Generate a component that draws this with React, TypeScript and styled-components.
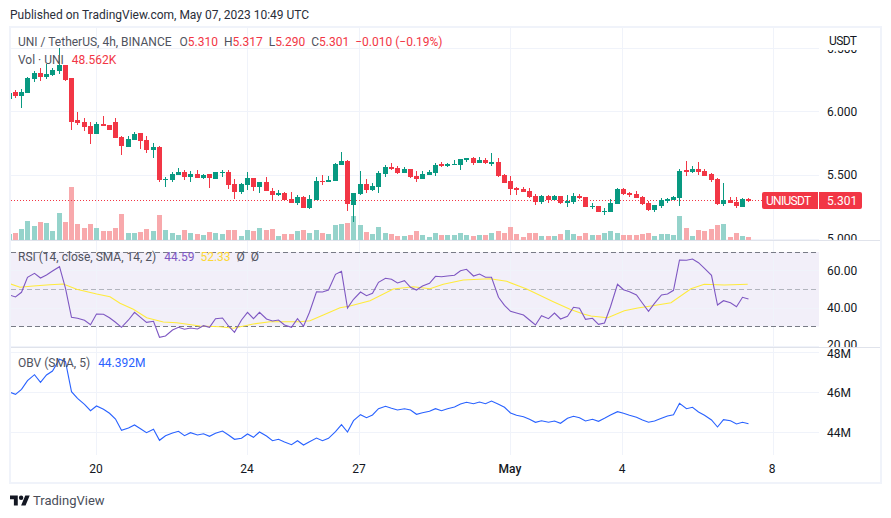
import React from "react";
import styled, { createGlobalStyle } from "styled-components";

const UI = `Roboto, "Open Sans", sans-serif`;
const RED = "#f23645";
const GREEN = "#089981";
const GRID = "#f0f3fa";

const Global = createGlobalStyle`
  html, body { margin: 0; padding: 0; background: #fff; }
  body { font-family: ${UI}; color: #131722; }
`;

const Page = styled.div`
  width: 891px;
  height: 518px;
  display: flex;
  flex-direction: column;
  overflow: hidden;
  background: #fff;
`;
const Published = styled.div`
  height: 26px;
  padding: 7px 0 0 10px;
  box-sizing: border-box;
  font-size: 12px;
  line-height: 16px;
  color: #2a2e39;
`;
const Frame = styled.div`
  margin-left: 9px;
  width: 873px;
  height: 458px;
  box-sizing: border-box;
  border: 2px solid ${GRID};
  display: flex;
  flex-direction: column;
`;
const Pane = styled.div<{ $h: number; $line?: boolean }>`
  position: relative;
  height: ${(p) => p.$h}px;
  display: grid;
  grid-template-columns: 808px 61px;
  flex: none;
  ${(p) => (p.$line ? "border-bottom: 1px solid #e0e3eb;" : "")}
`;
const Plot = styled.svg`
  display: block;
  width: 808px;
  height: 100%;
`;
const Axis = styled.div`
  position: relative;
  overflow: hidden;
  background: #fff;
`;
const Tick = styled.div<{ $y: number }>`
  position: absolute;
  left: 8px;
  top: ${(p) => p.$y - 7}px;
  font-size: 12px;
  line-height: 16px;
  color: #131722;
`;
const Unit = styled.div`
  position: absolute;
  left: 0;
  top: 0;
  width: 100%;
  height: 22px;
  box-sizing: border-box;
  padding: 5px 0 0 10px;
  background: #fff;
  font-size: 12px;
  line-height: 16px;
  letter-spacing: -0.6px;
  color: #131722;
`;
const Legend = styled.div<{ $top: number }>`
  position: absolute;
  left: 7px;
  top: ${(p) => p.$top}px;
  display: flex;
  flex-direction: column;
  gap: 2px;
  font-size: 12px;
  line-height: 16px;
  color: #50535e;
  white-space: nowrap;
`;
const LegendRow = styled.div`
  display: flex;
  gap: 6px;
`;
const Title = styled.span`
  margin-right: 2px;
`;
const Val = styled.span<{ $c: string }>`
  color: ${(p) => p.$c};
`;
const PriceTag = styled.div`
  position: absolute;
  left: 751px;
  top: 164px;
  height: 17px;
  display: flex;
  gap: 1px;
  font-size: 12px;
  line-height: 18px;
  color: #fff;
`;
const TagName = styled.div`
  width: 56px;
  box-sizing: border-box;
  padding-left: 4px;
  letter-spacing: -0.7px;
  background: ${RED};
  border-radius: 2px 0 0 2px;
`;
const TagPrice = styled.div`
  width: 43px;
  box-sizing: border-box;
  padding-left: 8px;
  background: ${RED};
  border-radius: 0 2px 2px 0;
`;
const TimeAxis = styled.div`
  position: relative;
  height: 27px;
  flex: none;
`;
const TimeLabel = styled.div<{ $x: number; $bold?: boolean }>`
  position: absolute;
  left: ${(p) => p.$x}px;
  top: 6px;
  transform: translateX(-50%);
  font-size: 12px;
  line-height: 16px;
  font-weight: ${(p) => (p.$bold ? 500 : 400)};
  color: #131722;
`;
const Footer = styled.div`
  flex: 1;
  display: flex;
  align-items: center;
  gap: 3px;
  padding-left: 10px;
`;
const Brand = styled.span`
  font-size: 13px;
  line-height: 16px;
  color: #4a4e59;
`;

// top, bottom, wick top, wick bottom, up
type C = [number, number, number, number, number];
const candles: C[] = [
  [93,99,93,99,1],[92,96,90,98,0],[92,96,89,108,1],[78,93,77,93,1],[73,79,71,82,1],[73,77,68,81,0],[74,77,64,79,1],[70,75,68,76,1],[65,71,48,74,1],[65,80,65,81,0],
  [78,122,78,130,0],[120,123,112,125,0],[122,127,118,131,0],[126,134,122,144,0],[124,134,122,134,1],[124,126,116,126,0],[125,130,125,130,0],[122,138,118,138,0],[137,146,136,155,0],[139,147,136,147,1],
  [134,140,132,140,1],[133,141,133,149,0],[140,150,136,153,0],[147,150,143,158,1],[147,180,146,182,0],[179,180,177,187,1],[174,180,172,182,1],[172,175,168,175,1],[172,177,170,180,0],[174,177,171,182,1],
  [174,178,170,178,0],[175,178,174,179,1],[174,178,174,188,0],[172,179,172,179,1],[172,173,170,177,1],[172,185,170,189,0],[184,192,179,199,0],[184,192,183,194,1],[178,185,172,190,1],[178,187,178,191,0],
  [182,187,182,193,1],[182,191,177,191,0],[191,195,188,200,0],[193,195,190,196,1],[193,200,192,201,0],[199,203,192,203,0],[197,203,195,205,1],
  [197,208,196,208,0],[199,208,195,209,1],[181,200,177,200,1],[181,182,175,185,0],[180,182,176,182,1],[164,181,163,181,1],[161,165,152,165,1],[161,204,160,211,0],[193,205,193,222,1],[184,194,171,195,1],
  [184,190,179,193,0],[186,190,183,191,1],[173,187,171,193,1],[167,174,165,177,1],[167,169,163,170,0],[168,173,166,174,0],[169,173,167,173,1],[169,177,169,178,0],[176,179,171,182,0],[174,179,171,179,1],
  [172,175,170,175,1],[165,173,163,176,1],[164,166,162,167,0],[164,166,163,167,1],[164,165,160,165,1],[159,165,159,170,1],[158,160,158,162,1],[158,163,157,165,0],[160,163,157,163,1],[160,163,158,164,0],
  [162,164,153,166,1],[162,176,158,177,0],[175,183,174,183,0],[181,189,176,195,0],[188,190,187,195,0],[189,192,187,192,0],[191,197,188,198,0],[196,202,194,205,0],[196,202,195,204,1],[196,200,195,203,0],
  [196,200,195,200,1],[196,203,196,204,0],[201,203,195,207,1],[196,202,193,204,1],[196,198,194,199,0],[197,207,197,207,0],[206,207,203,209,1],[206,212,206,212,0],
  [211,212,208,215,1],[203,212,199,212,1],[189,204,188,204,1],[189,194,188,195,0],[193,195,192,197,0],[194,198,191,198,0],[197,204,196,205,0],[203,210,201,211,0],[205,210,205,212,1],[200,206,198,208,1],
  [199,201,198,203,1],[197,200,196,200,1],[171,198,169,206,1],[170,172,161,176,0],[169,172,166,173,1],[169,172,162,175,0],[171,176,169,176,0],[174,180,173,182,0],[179,204,178,205,0],[200,204,183,206,1],
  [200,203,197,203,0],[202,206,197,208,0],[199,207,198,207,1],[199,201,198,202,0],
];
const volZ = [
  312,309,297,273,288,276,279,303,249,276,171,282,294,282,294,303,303,294,252,309,309,306,297,303,255,300,309,315,300,309,312,315,306,309,312,300,300,318,300,303,294,300,297,318,312,312,303,
  300,309,300,309,312,285,282,279,258,285,306,312,291,309,312,318,318,315,303,315,321,309,315,315,315,309,315,318,315,315,309,303,309,291,312,321,309,309,318,318,318,312,300,312,318,309,315,315,
  309,303,309,315,315,315,312,309,318,312,312,315,258,294,318,300,303,297,285,282,321,309,318,321,
];
const rsiZ = [
  165,171,157,112,100,114,105,93,80,145,232,235,241,254,222,223,233,247,262,240,217,232,247,244,292,288,270,262,268,264,267,257,262,236,234,258,277,240,217,236,217,237,243,240,255,262,236,
  259,217,155,156,150,103,94,204,178,156,167,160,127,115,118,129,122,142,150,138,130,109,110,108,106,92,88,108,102,112,112,172,196,214,219,225,240,255,227,236,219,237,229,202,205,238,235,253,
  249,200,133,149,155,165,190,214,190,165,162,151,60,61,57,68,85,106,195,182,188,200,172,177,
];
const obvZ = [
  126,133,118,92,74,97,75,63,28,35,125,145,163,182,168,178,190,207,241,234,225,236,248,238,271,257,249,244,257,248,255,251,259,250,243,255,268,265,252,262,246,258,272,268,276,284,272,
  285,275,264,272,265,245,224,246,212,194,203,195,176,169,175,180,176,180,193,188,184,176,182,176,171,162,157,161,156,161,153,163,172,189,196,200,208,217,212,217,213,220,205,199,203,213,208,214,
  205,195,185,190,196,202,210,217,213,205,198,194,160,176,172,186,196,210,231,209,212,222,217,221,
];
const smaSeg: [number, [number, number][]][] = [
  [0, [[30,131],[60,142],[100,138],[150,134],[190,132],[230,148],[290,162],[330,170],[360,190],[400,208],[440,233],[490,246],[530,248],[600,258],[660,260],[700,265],[760,252],[810,245],[899,245]]],
  [300, [[30,242],[70,225],[120,203],[150,198],[210,182],[280,147],[340,140],[390,146],[430,133],[490,120],[570,116],[620,124],[680,147],[760,185],[810,208],[850,222],[873,228]]],
  [591, [[50,233],[100,212],[140,204],[180,198],[240,188],[300,146],[340,133],[400,135],[470,133]]],
];

const cx = (k: number) => Math.round(96.3 + 6.27 * (k - 14));
const VGRID = [96, 247, 359, 510, 622, 773];

const VLines = ({ y1, y2 }: { y1: number; y2: number }) => (
  <g stroke={GRID} shapeRendering="crispEdges">
    {VGRID.map((x) => (
      <line key={x} x1={x + 0.5} x2={x + 0.5} y1={y1} y2={y2} />
    ))}
  </g>
);
const HLines = ({ ys }: { ys: number[] }) => (
  <g stroke={GRID} shapeRendering="crispEdges">
    {ys.map((y) => (
      <line key={y} x1={11} x2={819} y1={y + 0.5} y2={y + 0.5} />
    ))}
  </g>
);
const series = (z: number[], base: number) =>
  z.map((v, k) => `${cx(k) + 0.5},${(base + v / 3).toFixed(1)}`).join(" ");

const MainPlot = () => (
  <Plot viewBox="11 28 808 212">
    <VLines y1={28} y2={240} />
    <HLines ys={[48, 111, 175, 239]} />
    <g shapeRendering="crispEdges">
      {volZ.map((z, k) => {
        const top = Math.round(130 + z / 3);
        return (
          <rect key={k} x={cx(k) - 2} y={top} width={5} height={240 - top} fill={candles[k][4] ? "#95d3cb" : "#f8a9ac"} />
        );
      })}
    </g>
    <line x1={11} x2={762} y1={200.5} y2={200.5} stroke={RED} strokeDasharray="1 2" shapeRendering="crispEdges" />
    <g shapeRendering="crispEdges">
      {candles.map(([t, b, wt, wb, up], k) => {
        const c = up ? GREEN : RED;
        return (
          <g key={k} fill={c}>
            <rect x={cx(k)} y={wt} width={1} height={wb - wt} />
            <rect x={cx(k) - 2} y={t} width={5} height={Math.max(1, b - t)} />
          </g>
        );
      })}
    </g>
  </Plot>
);

const RsiPlot = () => (
  <Plot viewBox="11 241 808 106">
    <rect x={11} y={252} width={808} height={74.5} fill="#f2eff9" />
    <VLines y1={241} y2={347} />
    <HLines ys={[270, 308, 346]} />
    <g strokeDasharray="5 3" shapeRendering="crispEdges">
      <line x1={11} x2={819} y1={252.5} y2={252.5} stroke="#787b86" />
      <line x1={11} x2={819} y1={289.5} y2={289.5} stroke="#b2b5be" />
      <line x1={11} x2={819} y1={326.5} y2={326.5} stroke="#787b86" />
    </g>
    <polyline fill="none" stroke="#ffeb3b" strokeWidth={1.1} points={smaSeg.flatMap(([ox, pts]) => pts.map(([zx, zy]) => `${(ox + zx / 3).toFixed(1)},${(240 + zy / 3).toFixed(1)}`)).join(" ")} />
    <polyline fill="none" stroke="#7e57c2" strokeWidth={1.1} points={series(rsiZ, 240)} />
  </Plot>
);

const ObvPlot = () => (
  <Plot viewBox="11 348 808 107">
    <VLines y1={348} y2={455} />
    <HLines ys={[352, 392, 432]} />
    <polyline fill="none" stroke="#2962ff" strokeWidth={1.1} points={series(obvZ, 350)} />
  </Plot>
);

const TvLogo = () => (
  <svg width="20" height="16" viewBox="0 0 36 28" fill="#131722">
    <path d="M14 22H7V11H0V4h14v18zM28 22h-8l7.5-18h8L28 22z" />
    <circle cx="20" cy="8" r="4" />
  </svg>
);

export default function App() {
  return (
    <Page>
      <Global />
      <Published>Published on TradingView.com, May 07, 2023 10:49 UTC</Published>
      <Frame>
        <Pane $h={212} $line>
          <MainPlot />
          <Axis>
            <Tick $y={20}>6.500</Tick>
            <Tick $y={83}>6.000</Tick>
            <Tick $y={146}>5.500</Tick>
            <Tick $y={210}>5.000</Tick>
            <Unit>USDT</Unit>
          </Axis>
          <Legend $top={6}>
            <LegendRow>
              <Title>UNI / TetherUS, 4h, BINANCE</Title>
              <span>O<Val $c={RED}>5.310</Val></span>
              <span>H<Val $c={RED}>5.317</Val></span>
              <span>L<Val $c={RED}>5.290</Val></span>
              <span>C<Val $c={RED}>5.301</Val></span>
              <Val $c={RED}>−0.010 (−0.19%)</Val>
            </LegendRow>
            <LegendRow>
              <Title>Vol · UNI</Title>
              <Val $c={RED}>48.562K</Val>
            </LegendRow>
          </Legend>
          <PriceTag>
            <TagName>UNIUSDT</TagName>
            <TagPrice>5.301</TagPrice>
          </PriceTag>
        </Pane>
        <Pane $h={106} $line>
          <RsiPlot />
          <Axis>
            <Tick $y={29}>60.00</Tick>
            <Tick $y={66}>40.00</Tick>
            <Tick $y={103}>20.00</Tick>
          </Axis>
          <Legend $top={8}>
            <LegendRow>
              <Title>RSI (14, close, SMA, 14, 2)</Title>
              <Val $c="#7e57c2">44.59</Val>
              <Val $c="#fdd835">52.33</Val>
              <span>Ø</span>
              <span>Ø</span>
            </LegendRow>
          </Legend>
        </Pane>
        <Pane $h={107}>
          <ObvPlot />
          <Axis>
            <Tick $y={5}>48M</Tick>
            <Tick $y={44}>46M</Tick>
            <Tick $y={84}>44M</Tick>
          </Axis>
          <Legend $top={7}>
            <LegendRow>
              <Title>OBV (SMA, 5)</Title>
              <Val $c="#2962ff">44.392M</Val>
            </LegendRow>
          </Legend>
        </Pane>
        <TimeAxis>
          <TimeLabel $x={85}>20</TimeLabel>
          <TimeLabel $x={236}>24</TimeLabel>
          <TimeLabel $x={348}>27</TimeLabel>
          <TimeLabel $x={499} $bold>May</TimeLabel>
          <TimeLabel $x={611}>4</TimeLabel>
          <TimeLabel $x={761}>8</TimeLabel>
        </TimeAxis>
      </Frame>
      <Footer>
        <TvLogo />
        <Brand>TradingView</Brand>
      </Footer>
    </Page>
  );
}
